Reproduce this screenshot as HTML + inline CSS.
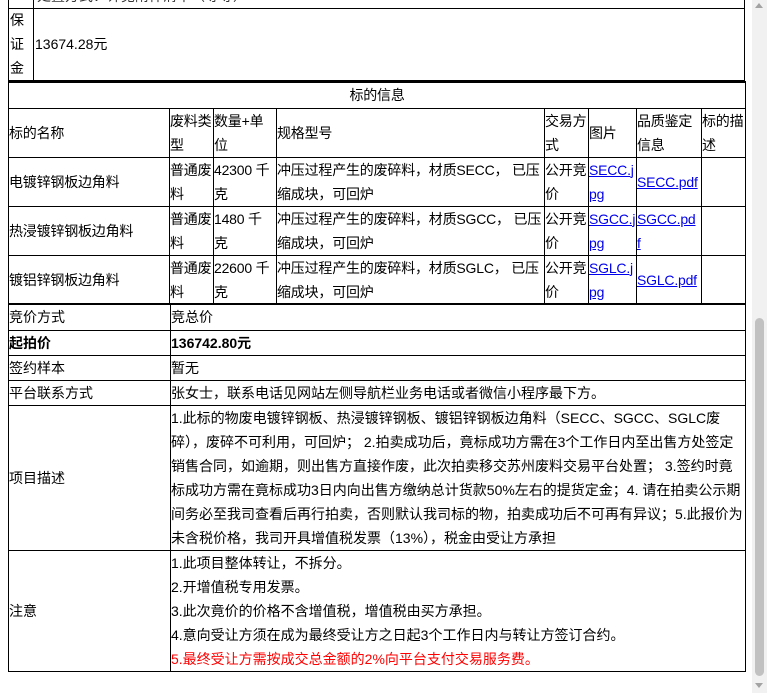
<!DOCTYPE html>
<html><head><meta charset="utf-8"><style>
html,body{margin:0;padding:0;background:#fff;width:767px;height:693px;overflow:hidden}
body{font-family:"Liberation Sans","Noto Sans CJK SC",sans-serif;font-size:14px;color:#000;position:relative}
.box{position:absolute;border:1px solid #000;box-sizing:border-box}
table{position:absolute;border-collapse:collapse;table-layout:fixed}
td{border:1px solid #000;padding:0;line-height:24px;vertical-align:middle;overflow:hidden;word-break:break-all}
.t1 td{letter-spacing:-0.2px}
a{color:#00e;text-decoration:underline}
.sb{position:absolute;left:752px;top:0;width:15px;height:693px;background:#f1f1f1}
.th{position:absolute;left:755px;top:318px;width:9px;height:358px;background:#c1c1c1;border-radius:5px}
</style></head><body>
<div class="box" style="left:8px;top:-10px;width:737px;height:19px"></div>
<div style="position:absolute;left:33px;top:-10px;width:1px;height:91px;background:#000"></div>
<div style="position:absolute;left:37px;top:-11px;font-size:14px;line-height:14px;color:#333">处置方式：详见附件清单（等等）</div>
<div class="box" style="left:8px;top:8px;width:737px;height:74px;border-bottom:2px solid #000"></div>
<div style="position:absolute;left:10px;top:8px;line-height:24px;width:20px">保<br>证<br>金</div>
<div style="position:absolute;left:35px;top:32px;line-height:24px">13674.28元</div>

<table class="t1" style="left:8px;top:81px;width:737px">
<colgroup><col style="width:161px"><col style="width:44px"><col style="width:63px"><col style="width:268px"><col style="width:44px"><col style="width:48px"><col style="width:65px"><col style="width:44px"></colgroup>
<tr style="height:26px"><td colspan="8" style="text-align:center;border-top:2px solid #000">标的信息</td></tr>
<tr style="height:49px"><td>标的名称</td><td>废料类型</td><td>数量+单位</td><td>规格型号</td><td>交易方式</td><td>图片</td><td>品质鉴定信息</td><td>标的描述</td></tr>
<tr style="height:49px"><td>电镀锌钢板边角料</td><td>普通废料</td><td>42300 千<br>克</td><td>冲压过程产生的废碎料，材质SECC， 已压缩成块，可回炉</td><td>公开竞价</td><td><a>SECC.j<br>pg</a></td><td><a>SECC.pdf</a></td><td></td></tr>
<tr style="height:49px"><td>热浸镀锌钢板边角料</td><td>普通废料</td><td>1480 千<br>克</td><td>冲压过程产生的废碎料，材质SGCC， 已压缩成块，可回炉</td><td>公开竞价</td><td><a>SGCC.j<br>pg</a></td><td><a>SGCC.pd<br>f</a></td><td></td></tr>
<tr style="height:49px"><td>镀铝锌钢板边角料</td><td>普通废料</td><td>22600 千<br>克</td><td>冲压过程产生的废碎料，材质SGLC， 已压缩成块，可回炉</td><td>公开竞价</td><td><a>SGLC.j<br>pg</a></td><td><a>SGLC.pdf</a></td><td></td></tr>
</table>

<table style="left:8px;top:303px;width:737px">
<colgroup><col style="width:162px"><col style="width:575px"></colgroup>
<tr style="height:26px"><td style="border-top:2px solid #000">竞价方式</td><td style="border-top:2px solid #000">竞总价</td></tr>
<tr style="height:25px"><td><b>起拍价</b></td><td><b>136742.80元</b></td></tr>
<tr style="height:25px"><td>签约样本</td><td>暂无</td></tr>
<tr style="height:25px"><td>平台联系方式</td><td>张女士，联系电话见网站左侧导航栏业务电话或者微信小程序最下方。</td></tr>
<tr style="height:145px"><td>项目描述</td><td>1.此标的物废电镀锌钢板、热浸镀锌钢板、镀铝锌钢板边角料（SECC、SGCC、SGLC废碎），废碎不可利用，可回炉； 2.拍卖成功后，竟标成功方需在3个工作日内至出售方处签定销售合同，如逾期，则出售方直接作废，此次拍卖移交苏州废料交易平台处置； 3.签约时竟标成功方需在竟标成功3日内向出售方缴纳总计货款50%左右的提货定金；4. 请在拍卖公示期间务必至我司查看后再行拍卖，否则默认我司标的物，拍卖成功后不可再有异议；5.此报价为未含税价格，我司开具增值税发票（13%），税金由受让方承担</td></tr>
<tr style="height:121px"><td>注意</td><td>1.此项目整体转让，不拆分。<br>2.开增值税专用发票。<br>3.此次竟价的价格不含增值税，增值税由买方承担。<br>4.意向受让方须在成为最终受让方之日起3个工作日内与转让方签订合约。<br><span style="color:#f00">5.最终受让方需按成交总金额的2%向平台支付交易服务费。</span></td></tr>
</table>

<div class="sb"></div><div class="th"></div>
<div style="position:absolute;left:755px;top:3px;width:0;height:0;border-left:4px solid transparent;border-right:4px solid transparent;border-bottom:5px solid #a3a3a3"></div>
<div style="position:absolute;left:755px;top:683px;width:0;height:0;border-left:4px solid transparent;border-right:4px solid transparent;border-top:5px solid #a3a3a3"></div>
</body></html>
